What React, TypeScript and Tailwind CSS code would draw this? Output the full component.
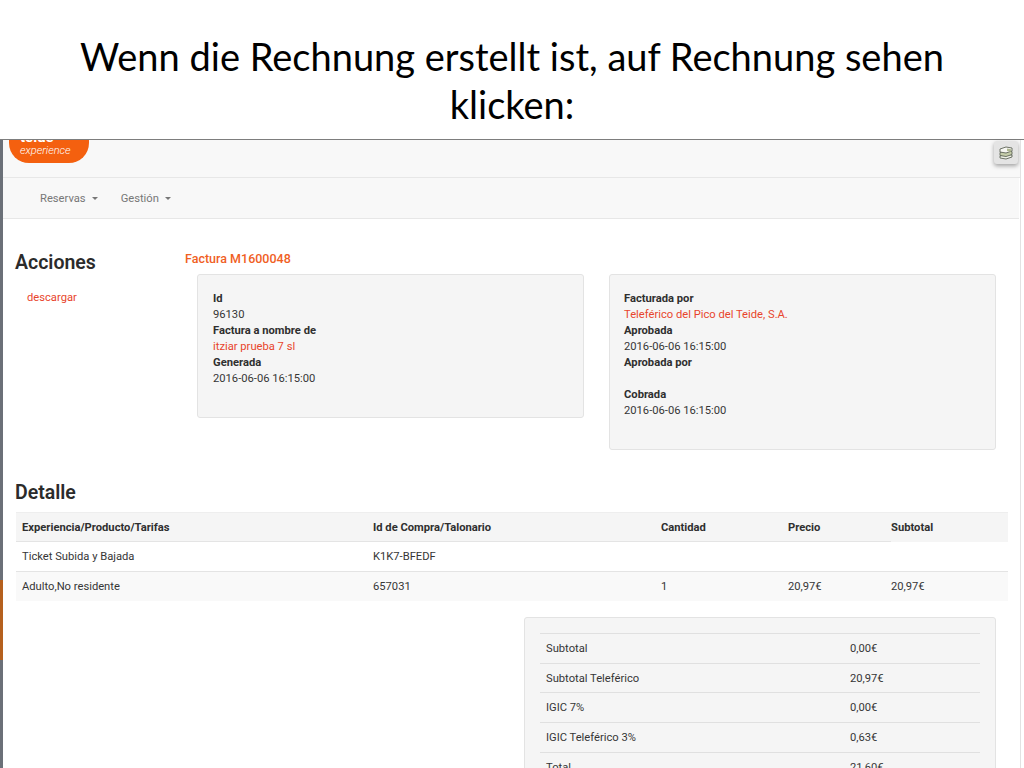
const font = { fontFamily: "Roboto, sans-serif" };

const Caret = () => (
  <span className="ml-[6px] inline-block align-middle w-0 h-0 border-x-[3.5px] border-x-transparent border-t-[3.5px] border-t-[#777]" />
);

const Card = ({ className, children }: { className: string; children: React.ReactNode }) => (
  <div className={`bg-[#f5f5f5] border border-[#e3e3e3] rounded-[3px] ${className}`}>{children}</div>
);

const Label = ({ children }: { children: React.ReactNode }) => (
  <div className="font-bold text-[#2f2f2f]">{children}</div>
);

const totals = [
  ["Subtotal", "0,00€"],
  ["Subtotal Teleférico", "20,97€"],
  ["IGIC 7%", "0,00€"],
  ["IGIC Teleférico 3%", "0,63€"],
  ["Total", "21,60€"],
];

export default function App() {
  return (
    <div className="w-[1024px] h-[768px] overflow-hidden bg-white flex flex-col">
      <div className="h-[139px] shrink-0 pt-[32px] text-center text-[38px] leading-[48px] text-black" style={{ fontFamily: "Lato, sans-serif" }}>
        <div className="px-[60px]">Wenn die Rechnung erstellt ist, auf Rechnung sehen klicken:</div>
      </div>

      <div className="flex flex-1 min-h-0 border-t border-[#7d7d7d] text-[11.2px] leading-[16px] text-[#363636]" style={font}>
        <div className="w-[3px] shrink-0 flex flex-col bg-[#6b7078]">
          <div className="h-[440px]" />
          <div className="h-[80px] bg-[#b5601e]" />
        </div>

        <div className="flex-1 min-w-0">
          {/* top bar */}
          <div className="h-[38px] bg-[#f8f8f8] border-b border-[#e7e7e7] flex justify-between">
            <div className="ml-[6px] w-[80px] h-[23px] bg-[#f4600f] rounded-b-[20px] overflow-hidden relative text-white">
              <div className="absolute left-[11px] -top-[11px] text-[15px] leading-[16px] font-bold">teide</div>
              <div className="absolute left-[11px] top-[4px] text-[11px] leading-[14px] italic font-light">experience</div>
            </div>
            <div className="mr-[2px] mt-[1px] w-[24px] h-[23px] bg-[#e4e4e4] rounded-[3px] shadow-[0_2px_4px_rgba(0,0,0,0.35)] flex items-center justify-center">
              <svg width="16" height="16" viewBox="0 0 16 16">
                <path d="M2 11l6-2 6 1v2l-6 2-6-1z" fill="#eef0e6" stroke="#5f6558" strokeWidth="0.9" />
                <path d="M2 7.500l6-2 6 1v3l-6 2-6-1z" fill="#c4cca8" stroke="#5f6558" strokeWidth="0.9" />
                <path d="M2 4l6-2 6 1v3l-6 2-6-1z" fill="#f6f6f2" stroke="#5f6558" strokeWidth="0.9" />
                <path d="M9 3.500l4 .7v2.500l-4-.7z" fill="#aeb78f" />
              </svg>
            </div>
          </div>

          {/* nav */}
          <div className="mr-[1px] h-[41px] bg-[#f8f8f8] border-b border-[#e7e7e7] pl-[37px] pt-[1px] flex items-center gap-[23px] text-[#777]">
            <span>Reservas<Caret /></span>
            <span>Gestión<Caret /></span>
          </div>

          {/* invoice head */}
          <div className="flex pt-[30px]">
            <div className="w-[182px] shrink-0 pl-[12px] pt-[1px]">
              <div className="text-[19.5px] leading-[26px] font-semibold text-[#2b2b2b]">Acciones</div>
              <div className="mt-[14px] pl-[12px] text-[#e8452c]">descargar</div>
            </div>
            <div className="flex-1">
              <div className="mt-[2px] h-[16px] text-[12.5px] font-medium text-[#f0601f]">Factura M1600048</div>
              <div className="mt-[7px] ml-[12px] flex items-start gap-[25px]">
                <Card className="w-[387px] h-[144px] px-[15px] pt-[16px]">
                  <Label>Id</Label>
                  <div>96130</div>
                  <Label>Factura a nombre de</Label>
                  <div className="text-[#e8452c]">itziar prueba 7 sl</div>
                  <Label>Generada</Label>
                  <div>2016-06-06 16:15:00</div>
                </Card>
                <Card className="w-[387px] h-[176px] pl-[14px] pr-[15px] pt-[16px]">
                  <Label>Facturada por</Label>
                  <div className="text-[#e8452c]">Teleférico del Pico del Teide, S.A.</div>
                  <Label>Aprobada</Label>
                  <div>2016-06-06 16:15:00</div>
                  <Label>Aprobada por</Label>
                  <div className="h-[16px]" />
                  <Label>Cobrada</Label>
                  <div>2016-06-06 16:15:00</div>
                </Card>
              </div>
            </div>
          </div>

          {/* detail table */}
          <div className="ml-[13px] mr-[13px] mt-[30px]">
            <div className="-ml-[1px] h-[26px] text-[19.5px] leading-[26px] font-semibold text-[#2b2b2b]">Detalle</div>
            <div className="mt-[6px] w-[992px]">
              <div className="grid grid-cols-[357px_288px_127px_103px_1fr] h-[30px] bg-[#f5f5f5] font-bold text-[#2f2f2f] border-t border-[#eee]">
                <div className="flex items-center pt-[2px] pl-[6px] border-b border-[#e4e4e4]">Experiencia/Producto/Tarifas</div>
                <div className="flex items-center pt-[2px] border-b border-[#e4e4e4]">Id de Compra/Talonario</div>
                <div className="flex items-center pt-[2px] border-b border-[#e4e4e4]">Cantidad</div>
                <div className="flex items-center pt-[2px] border-b border-[#e4e4e4]">Precio</div>
                <div className="flex items-center pt-[2px] border-b border-transparent">Subtotal</div>
              </div>
              <div className="grid grid-cols-[357px_288px_127px_103px_1fr] h-[30px] items-center border-b border-[#e4e4e4]">
                <div className="pl-[6px]">Ticket Subida y Bajada</div>
                <div>K1K7-BFEDF</div>
              </div>
              <div className="grid grid-cols-[357px_288px_127px_103px_1fr] h-[29px] items-center bg-[#f9f9f9]">
                <div className="pl-[6px]">Adulto,No residente</div>
                <div>657031</div>
                <div>1</div>
                <div>20,97€</div>
                <div>20,97€</div>
              </div>
            </div>
          </div>

          {/* totals */}
          <div className="mt-[16px] ml-[521px]">
            <Card className="w-[472px] h-[200px] pt-[15px] px-[15px]">
              {totals.map(([name, value]) => (
                <div key={name} className="grid grid-cols-[304px_1fr] h-[29.7px] items-center pl-[6px] pt-[1px] border-t border-[#e0e0e0]">
                  <div>{name}</div>
                  <div>{value}</div>
                </div>
              ))}
            </Card>
          </div>
        </div>

        <div className="w-[4px] shrink-0 border-l border-[#e2e2e2] bg-white" />
      </div>
    </div>
  );
}
